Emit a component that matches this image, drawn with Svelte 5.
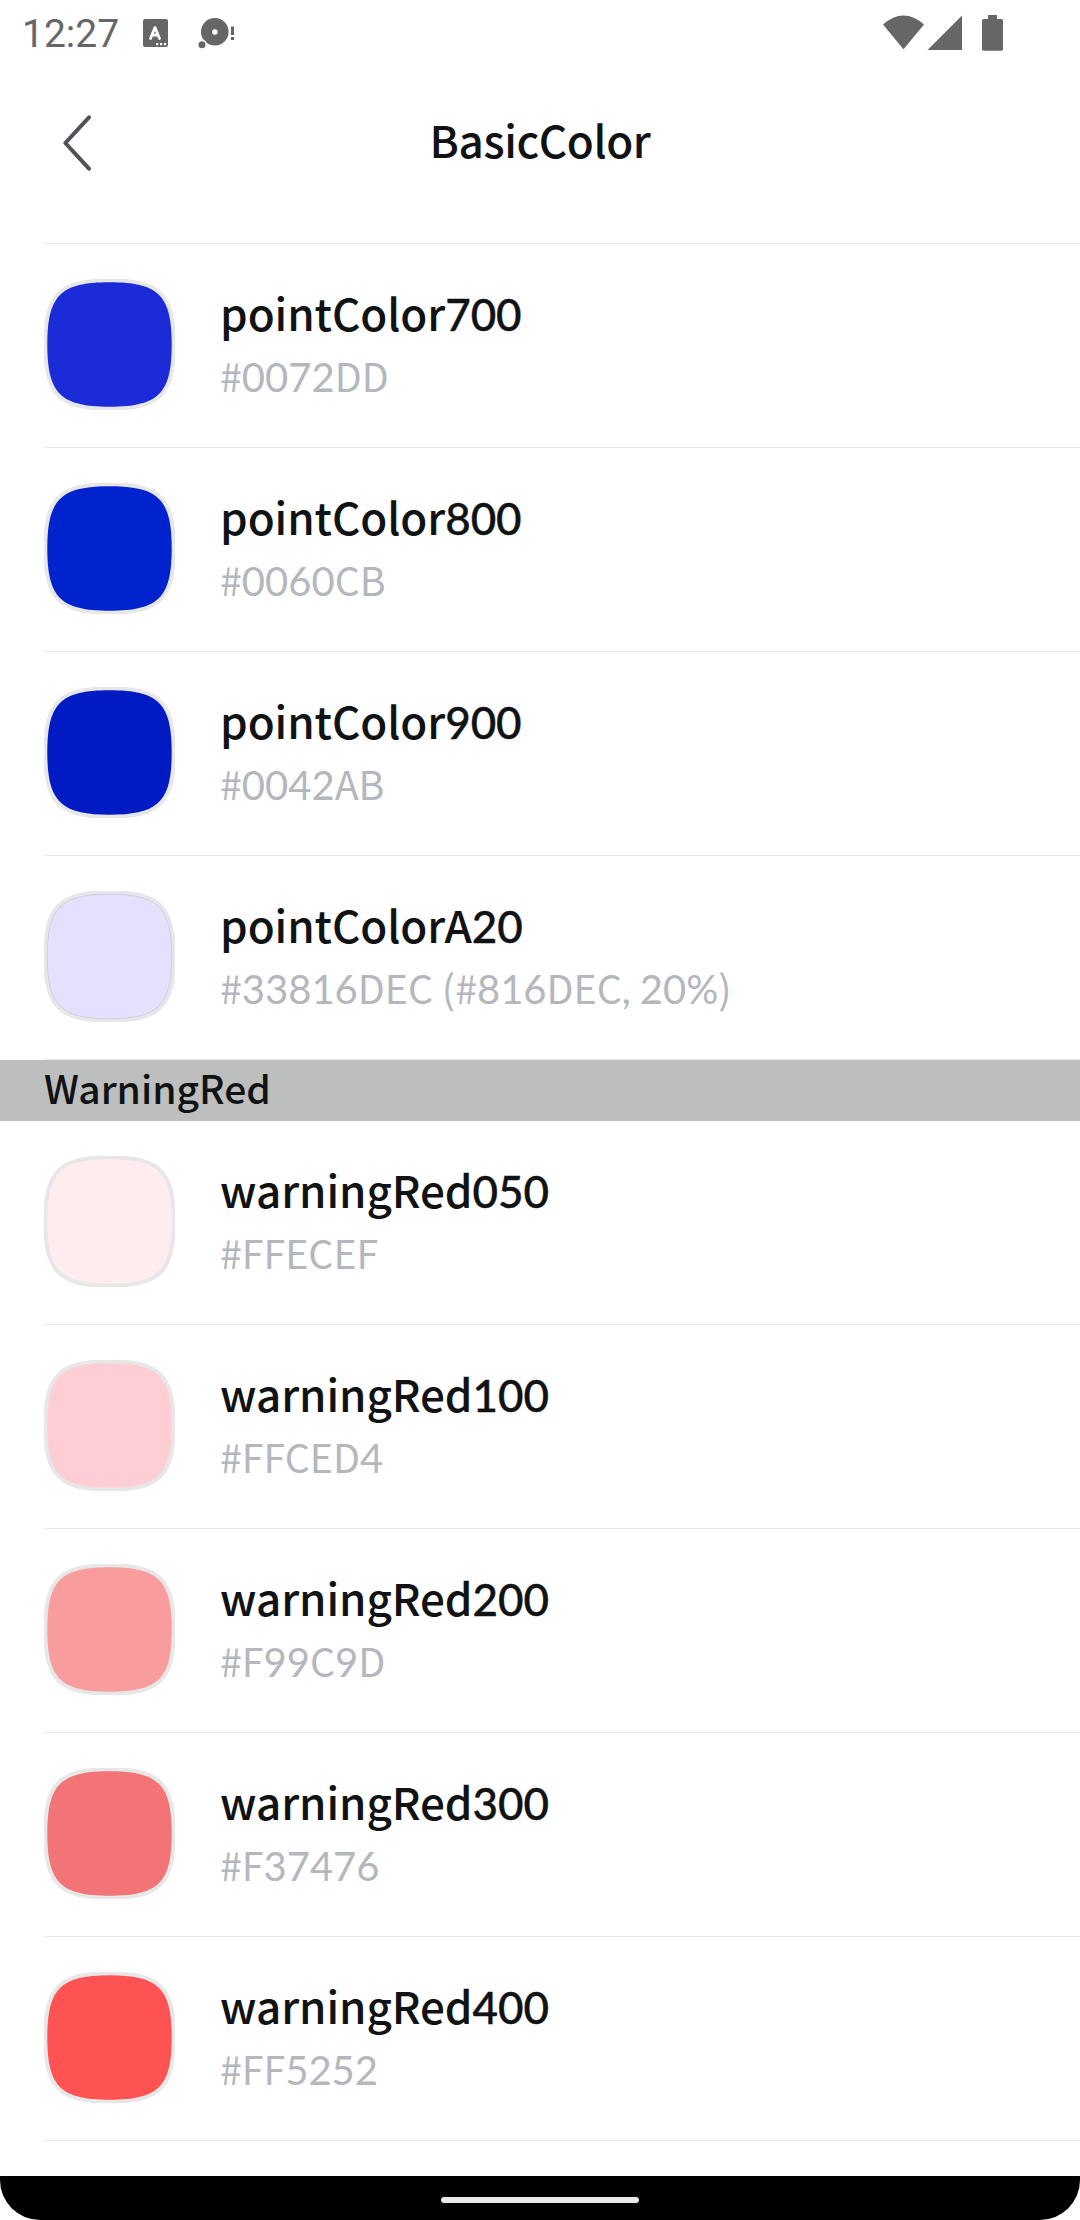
<script>
  const groups = [
    {
      title: null,
      colors: [
        { name: 'pointColor700', hex: '#0072DD', fill: '#1b2bd7' },
        { name: 'pointColor800', hex: '#0060CB', fill: '#0023cd' },
        { name: 'pointColor900', hex: '#0042AB', fill: '#001bc4' },
        { name: 'pointColorA20', hex: '#33816DEC (#816DEC, 20%)', fill: '#e5e0fb', edge: '#d2cce8' },
      ],
    },
    {
      title: 'WarningRed',
      colors: [
        { name: 'warningRed050', hex: '#FFECEF', fill: '#ffecef' },
        { name: 'warningRed100', hex: '#FFCED4', fill: '#ffced4' },
        { name: 'warningRed200', hex: '#F99C9D', fill: '#f99c9d' },
        { name: 'warningRed300', hex: '#F37476', fill: '#f37476' },
        { name: 'warningRed400', hex: '#FF5252', fill: '#ff5252' },
      ],
    },
  ];

  const squircle = 'M3.300 65.500C3.300 16.500 16.500 3.300 65.500 3.300S127.700 16.500 127.700 65.500 114.500 127.700 65.500 127.700 3.300 114.500 3.300 65.500Z';

  // Splits a label into runs so that figures can be set in their own face.
  const runs = (text) => text.match(/[\d,%]+|[^\d,%]+/g) ?? [];
</script>

{#snippet mixed(text)}{#each runs(text) as run}{#if /^[\d,%]/.test(run)}<span class="figures">{run}</span>{:else}{run}{/if}{/each}{/snippet}

<div class="screen">
  <header class="status">
    <span class="clock">12:27</span>
    <svg class="notes" width="96" height="34" viewBox="142 16 96 34">
      <rect x="143" y="19" width="25" height="28" rx="2" fill="#666" />
      <path d="M150.500 38.500 L155 27.500 L159.500 38.500 M152.200 35.200 H157.800" fill="none" stroke="#fff" stroke-width="2.800" stroke-linecap="round" stroke-linejoin="round" />
      <path d="M156 43h2.200v2.200H156zM160 43h2.200v2.200H160zM164 43h2.200v2.200H164z" fill="#fff" />
      <circle cx="214.800" cy="31.800" r="13.800" fill="#666" />
      <circle cx="202" cy="44.700" r="5" fill="#fff" />
      <circle cx="202" cy="44.700" r="3.500" fill="#666" />
      <circle cx="214.800" cy="32" r="2.800" fill="#fff" />
      <path d="M231 26.500h3v8.500h-3zM231 37h3v3h-3z" fill="#666" />
    </svg>
    <svg class="system" width="124" height="38" viewBox="882 14 124 38">
      <path d="M883 24.500 Q903.500 6.500 924 24.500 L903.500 49.300 Z" fill="#666" />
      <path d="M962 15.500 V50 H927.500 Z" fill="#666" />
      <path d="M988 15h9v4h4.500a1.500 1.500 0 0 1 1.500 1.500v28.500a1.700 1.700 0 0 1-1.700 1.700h-17.600a1.700 1.700 0 0 1-1.700-1.700V20.500a1.500 1.500 0 0 1 1.500-1.500H988z" fill="#666" />
    </svg>
  </header>

  <nav class="bar">
    <svg class="back" width="32" height="60" viewBox="61 113 32 60">
      <path d="M89 117.300 L65.300 143 L89 168.700" fill="none" stroke="#505259" stroke-width="4" stroke-linecap="round" stroke-linejoin="round" />
    </svg>
    <h1>BasicColor</h1>
  </nav>

  <main>
    <div class="rule"></div>
    {#each groups as group}
      {#if group.title}
        <h2>{group.title}</h2>
      {/if}
      {#each group.colors as color}
        <section class="row">
          <svg class="swatch" width="131" height="131" viewBox="0 0 131 131">
            <path d={squircle} fill="#e7e7e7" stroke="#e7e7e7" stroke-width="8" />
            <path d={squircle} fill={color.fill} stroke={color.edge ?? 'none'} />
          </svg>
          <div class="label">
            <span class="name">{@render mixed(color.name)}</span>
            <span class="hex">{@render mixed(color.hex)}</span>
          </div>
        </section>
        <div class="rule"></div>
      {/each}
    {/each}
  </main>

  <footer><div class="home"></div></footer>
</div>

<style>
  :global(body) {
    margin: 0;
    background: #fff;
  }
  .screen {
    width: 1080px;
    height: 2220px;
    display: flex;
    flex-direction: column;
    overflow: hidden;
    background: #fff;
    color: #111214;
    font-family: 'Noto Sans CJK KR', sans-serif;
  }
  .status {
    height: 66px;
    flex: none;
    display: flex;
    align-items: flex-start;
    color: #666;
  }
  .clock {
    width: 120px;
    margin-left: 22px;
    font: 400 39px/68px Roboto, sans-serif;
  }
  .notes {
    margin-top: 16px;
  }
  .system {
    margin: 14px 74px 0 auto;
  }
  .bar {
    height: 177px;
    flex: none;
    display: grid;
    grid-template-columns: 93px 1fr 93px;
  }
  .back {
    margin: 47px 0 0 61px;
  }
  h1 {
    margin: 40px 0 0;
    font-size: 44px;
    font-weight: 500;
    line-height: 66px;
    letter-spacing: -0.400px;
    text-align: center;
  }
  main {
    flex: 1;
    min-height: 0;
    overflow: hidden;
  }
  .rule {
    height: 1px;
    margin-left: 44px;
    background: #e7e7e7;
  }
  .row {
    height: 203px;
    box-sizing: border-box;
    padding: 35px 0 0 44px;
    display: flex;
    gap: 45px;
  }
  .swatch {
    flex: none;
    overflow: hidden;
  }
  .label {
    display: flex;
    flex-direction: column;
  }
  .name {
    height: 66px;
    font-size: 44px;
    font-weight: 500;
    line-height: 66px;
    letter-spacing: -0.080px;
  }
  .hex {
    margin-top: 1px;
    height: 58px;
    font-size: 39.300px;
    line-height: 58px;
    color: #b4b7bd;
  }
  .figures {
    font-family: Lato, sans-serif;
  }
  .name .figures {
    -webkit-text-stroke: 0.400px currentColor;
  }
  .hex .figures {
    font-size: 40px;
  }
  h2 {
    margin: 0;
    height: 61px;
    padding-left: 44px;
    background: #bdbfbe;
    font-size: 39px;
    font-weight: 500;
    line-height: 55px;
  }
  footer {
    height: 44px;
    flex: none;
    display: flex;
    justify-content: center;
    background: #000;
    border-radius: 0 0 40px 40px;
  }
  .home {
    width: 198px;
    height: 6px;
    margin-top: 21px;
    border-radius: 3px;
    background: #eaeaea;
  }
</style>
